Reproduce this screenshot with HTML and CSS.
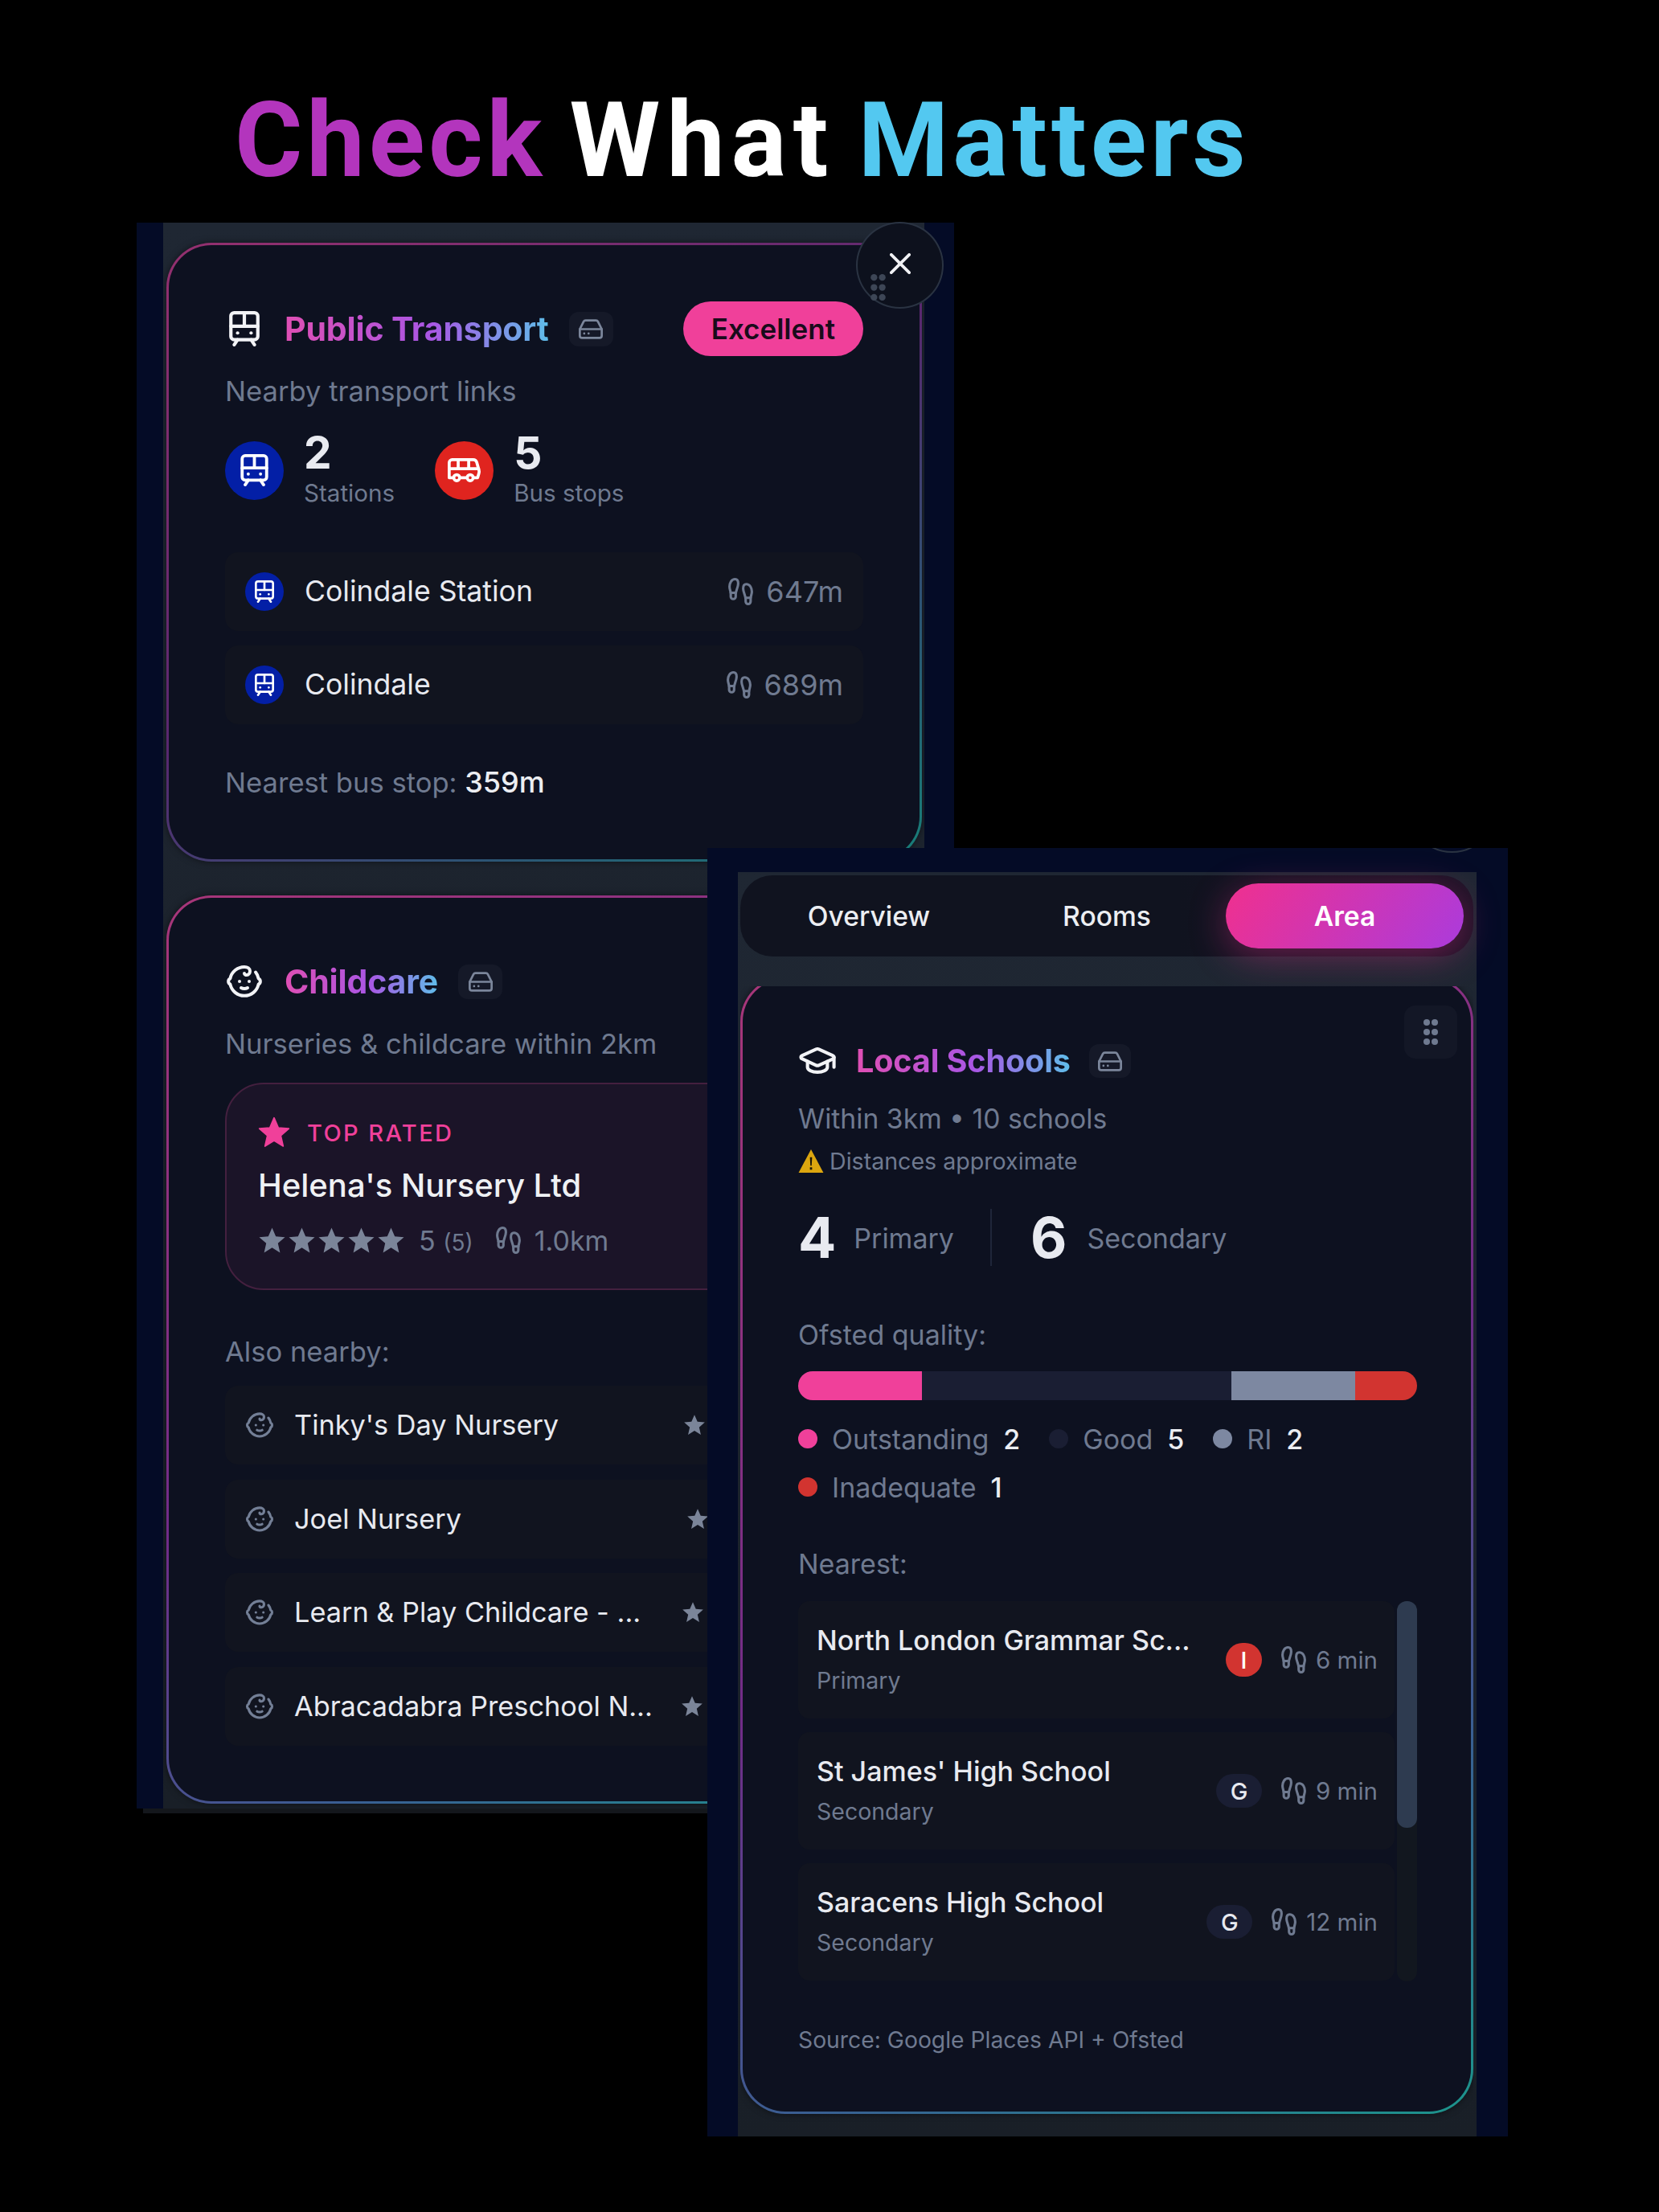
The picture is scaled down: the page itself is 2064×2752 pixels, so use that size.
FILE: index.html
```html
<!DOCTYPE html>
<html lang="en">
<head>
    <meta charset="UTF-8">
    <meta name="viewport" content="width=device-width, initial-scale=1.0">
    <title>Check What Matters</title>
    <link rel="stylesheet" href="styles.css">
</head>
<body>

    <svg class="sprite" aria-hidden="true">
        <symbol id="i-tram" viewBox="3 2 18 21">
            <rect width="16" height="16" x="4" y="3" rx="2"/><path d="M4 11h16"/><path d="M12 3v8"/><path d="m8 19-2 3"/><path d="m18 22-2-3"/><path d="M8 15h.01"/><path d="M16 15h.01"/>
        </symbol>
        <symbol id="i-bus" viewBox="1 5 22 16">
            <path d="M8 6v6"/><path d="M15 6v6"/><path d="M2 12h19.6"/><path d="M18 18h3s.5-1.7.8-2.8c.1-.4.2-.8.2-1.2 0-.4-.1-.8-.2-1.2l-1.4-5C20.1 6.8 19.1 6 18 6H4a2 2 0 0 0-2 2v10h3"/><circle cx="7" cy="18" r="2"/><path d="M9 18h5"/><circle cx="16" cy="18" r="2"/>
        </symbol>
        <symbol id="i-foot" viewBox="2 1 20 22">
            <path d="M4 16v-2.38C4 11.5 2.97 10.5 3 8c.03-2.72 1.49-6 4.5-6C9.37 2 10 3.8 10 5.5c0 3.11-2 5.66-2 8.68V16a2 2 0 1 1-4 0Z"/><path d="M20 20v-2.38c0-2.12 1.03-3.12 1-5.62-.03-2.72-1.49-6-4.5-6C14.63 6 14 7.8 14 9.5c0 3.11 2 5.66 2 8.68V20a2 2 0 1 0 4 0Z"/><path d="M16 17h4"/><path d="M4 13h4"/>
        </symbol>
        <symbol id="i-baby" viewBox="0.5 2 23 20">
            <path d="M9 12h.01"/><path d="M15 12h.01"/><path d="M10 16c.5.3 1.2.5 2 .5s1.5-.2 2-.5"/><path d="M19 6.3a9 9 0 0 1 1.8 3.9 2 2 0 0 1 0 3.6 9 9 0 0 1-17.6 0 2 2 0 0 1 0-3.6A9 9 0 0 1 12 3c2 0 3.5 1.1 3.5 2.5s-.9 2.5-2 2.5c-.8 0-1.5-.4-1.5-1"/>
        </symbol>
        <symbol id="i-cap" viewBox="1 4 22 17">
            <path d="M21.42 10.922a1 1 0 0 0-.019-1.838L12.83 5.18a2 2 0 0 0-1.66 0L2.6 9.08a1 1 0 0 0 0 1.832l8.57 3.908a2 2 0 0 0 1.66 0z"/><path d="M22 10v6"/><path d="M6 12.5V16a6 3 0 0 0 12 0v-3.5"/>
        </symbol>
        <symbol id="i-drive" viewBox="1 3 22 18">
            <path d="M22 12H2"/><path d="M5.45 5.11 2 12v6a2 2 0 0 0 2 2h16a2 2 0 0 0 2-2v-6l-3.45-6.89A2 2 0 0 0 16.76 4H7.24a2 2 0 0 0-1.79 1.11z"/><path d="M6 16h.01"/><path d="M10 16h.01"/>
        </symbol>
        <symbol id="i-x" viewBox="5 5 14 14">
            <path d="M18 6 6 18"/><path d="m6 6 12 12"/>
        </symbol>
        <symbol id="i-star" viewBox="0 0 24 24">
            <polygon points="12 1 15.2 8.4 23 9.1 17 14.3 18.8 22.2 12 18 5.2 22.2 7 14.3 1 9.1 8.8 8.4"/>
        </symbol>
        <symbol id="i-grip" viewBox="0 0 18 32">
            <circle cx="4" cy="4" r="4"/><circle cx="14" cy="4" r="4"/><circle cx="4" cy="16" r="4"/><circle cx="14" cy="16" r="4"/><circle cx="4" cy="28" r="4"/><circle cx="14" cy="28" r="4"/>
        </symbol>
        <symbol id="i-warn" viewBox="0 0 32 30">
            <path class="warn-fill" d="M16 0 32 30H0Z"/><path class="warn-mark" d="M14.6 10h2.8l-.6 11h-1.6zM14.6 23h2.8v3h-2.8z"/>
        </symbol>
    </svg>

    <h1 class="headline"><span class="purple">Check</span> <span class="wide">What</span> <span class="sky">Matters</span></h1>

    <section class="panel panel-left">
        <button class="close-btn" type="button" aria-label="Close">
            <svg class="ico x-ico"><use href="#i-x"/></svg>
            <svg class="solid grip-faint"><use href="#i-grip"/></svg>
        </button>

        <div class="panel-inner left-inner">
            <article class="card card-dim">
                <header class="card-head">
                    <span class="head-icon"><svg class="ico tram-head"><use href="#i-tram"/></svg></span>
                    <h2 class="card-title">Public Transport</h2>
                    <span class="mini-badge"><svg class="ico drive-ico"><use href="#i-drive"/></svg></span>
                    <span class="score-pill">Excellent</span>
                </header>
                <p class="sub sub-first">Nearby transport links</p>

                <div class="transport-stats">
                    <div class="stat">
                        <span class="stat-circle blue"><svg class="ico tram-stat"><use href="#i-tram"/></svg></span>
                        <div>
                            <div class="stat-num">2</div>
                            <div class="stat-label">Stations</div>
                        </div>
                    </div>
                    <div class="stat">
                        <span class="stat-circle red"><svg class="ico bus-stat"><use href="#i-bus"/></svg></span>
                        <div>
                            <div class="stat-num">5</div>
                            <div class="stat-label">Bus stops</div>
                        </div>
                    </div>
                </div>

                <div class="rows station-rows">
                    <div class="row">
                        <span class="row-circle"><svg class="ico tram-row"><use href="#i-tram"/></svg></span>
                        <span class="row-name">Colindale Station</span>
                        <span class="row-dist"><svg class="ico foot"><use href="#i-foot"/></svg>647m</span>
                    </div>
                    <div class="row">
                        <span class="row-circle"><svg class="ico tram-row"><use href="#i-tram"/></svg></span>
                        <span class="row-name">Colindale</span>
                        <span class="row-dist"><svg class="ico foot"><use href="#i-foot"/></svg>689m</span>
                    </div>
                </div>

                <p class="sub nearest-stop">Nearest bus stop: <strong>359m</strong></p>
            </article>

            <article class="card">
                <header class="card-head">
                    <span class="head-icon"><svg class="ico baby-head"><use href="#i-baby"/></svg></span>
                    <h2 class="card-title">Childcare</h2>
                    <span class="mini-badge"><svg class="ico drive-ico"><use href="#i-drive"/></svg></span>
                    <span class="score-pill">3</span>
                </header>
                <p class="sub sub-first">Nurseries &amp; childcare within 2km</p>

                <div class="top-box">
                    <div class="top-tag"><svg class="solid star-pink"><use href="#i-star"/></svg>TOP RATED</div>
                    <div class="top-name">Helena's Nursery Ltd</div>
                    <div class="top-meta">
                        <span class="stars">
                            <svg class="solid star-grey"><use href="#i-star"/></svg>
                            <svg class="solid star-grey"><use href="#i-star"/></svg>
                            <svg class="solid star-grey"><use href="#i-star"/></svg>
                            <svg class="solid star-grey"><use href="#i-star"/></svg>
                            <svg class="solid star-grey"><use href="#i-star"/></svg>
                        </span>
                        <span class="rate">5 <small>(5)</small></span>
                        <svg class="ico foot"><use href="#i-foot"/></svg>
                        <span>1.0km</span>
                    </div>
                </div>

                <p class="sub also">Also nearby:</p>
                <div class="rows nursery-rows">
                    <div class="row">
                        <svg class="ico baby-row"><use href="#i-baby"/></svg>
                        <span class="row-name">Tinky's Day Nursery</span>
                        <svg class="solid star-row star-a"><use href="#i-star"/></svg>
                    </div>
                    <div class="row">
                        <svg class="ico baby-row"><use href="#i-baby"/></svg>
                        <span class="row-name">Joel Nursery</span>
                        <svg class="solid star-row star-b"><use href="#i-star"/></svg>
                    </div>
                    <div class="row">
                        <svg class="ico baby-row"><use href="#i-baby"/></svg>
                        <span class="row-name">Learn &amp; Play Childcare - ...</span>
                        <svg class="solid star-row star-c"><use href="#i-star"/></svg>
                    </div>
                    <div class="row">
                        <svg class="ico baby-row"><use href="#i-baby"/></svg>
                        <span class="row-name">Abracadabra Preschool N...</span>
                        <svg class="solid star-row star-d"><use href="#i-star"/></svg>
                    </div>
                </div>
            </article>
        </div>
    </section>

    <section class="panel panel-right">
        <span class="close-peek"></span>
        <div class="panel-inner right-inner">
            <nav class="tabs">
                <a class="tab">Overview</a>
                <a class="tab">Rooms</a>
                <a class="tab tab-on">Area</a>
            </nav>

            <div class="scroll-clip">
                <article class="card school-card">
                    <span class="grip-btn"><svg class="solid grip"><use href="#i-grip"/></svg></span>
                    <header class="card-head school-head">
                        <span class="head-icon"><svg class="ico cap-head"><use href="#i-cap"/></svg></span>
                        <h2 class="card-title">Local Schools</h2>
                        <span class="mini-badge"><svg class="ico drive-ico"><use href="#i-drive"/></svg></span>
                    </header>
                    <p class="sub within">Within 3km &bull; 10 schools</p>
                    <p class="approx"><svg class="warn"><use href="#i-warn"/></svg>Distances approximate</p>

                    <div class="school-stats">
                        <span class="big-num">4</span>
                        <span class="big-label">Primary</span>
                        <span class="stats-rule"></span>
                        <span class="big-num">6</span>
                        <span class="big-label">Secondary</span>
                    </div>

                    <p class="sub ofsted">Ofsted quality:</p>
                    <div class="quality-bar">
                        <span class="seg-2 pink"></span>
                        <span class="seg-5 navy"></span>
                        <span class="seg-2 slate"></span>
                        <span class="seg-1 crimson"></span>
                    </div>
                    <ul class="legend">
                        <li><i class="dot pink"></i>Outstanding<b>2</b></li>
                        <li><i class="dot navy"></i>Good<b>5</b></li>
                        <li><i class="dot slate"></i>RI<b>2</b></li>
                        <li><i class="dot crimson"></i>Inadequate<b>1</b></li>
                    </ul>

                    <p class="sub nearest">Nearest:</p>
                    <div class="school-list">
                        <div class="school-rows">
                            <div class="school-row">
                                <div class="school-text">
                                    <div class="school-name">North London Grammar Sc...</div>
                                    <div class="school-type">Primary</div>
                                </div>
                                <span class="grade grade-i">I</span>
                                <span class="walk"><svg class="ico foot"><use href="#i-foot"/></svg>6 min</span>
                            </div>
                            <div class="school-row">
                                <div class="school-text">
                                    <div class="school-name">St James' High School</div>
                                    <div class="school-type">Secondary</div>
                                </div>
                                <span class="grade">G</span>
                                <span class="walk"><svg class="ico foot"><use href="#i-foot"/></svg>9 min</span>
                            </div>
                            <div class="school-row">
                                <div class="school-text">
                                    <div class="school-name">Saracens High School</div>
                                    <div class="school-type">Secondary</div>
                                </div>
                                <span class="grade">G</span>
                                <span class="walk"><svg class="ico foot"><use href="#i-foot"/></svg>12 min</span>
                            </div>
                        </div>
                        <div class="scroll-track"><div class="scroll-thumb"></div></div>
                    </div>

                    <p class="source">Source: Google Places API + Ofsted</p>
                </article>
            </div>
        </div>
    </section>

</body>
</html>
```

FILE: styles.css
```css
*{
    box-sizing: border-box;
}
body{
    margin: 0;
    min-height: 2752px;
    position: relative;
    background-color: #000;
    font-family: "Inter", "Liberation Sans", sans-serif;
    color: #e8eaf0;
}
p,h1,h2,ul{
    margin: 0;
    padding: 0;
}
.sprite{
    display: none;
}
.ico{
    fill: none;
    stroke: currentColor;
    stroke-width: 2;
    stroke-linecap: round;
    stroke-linejoin: round;
    flex: none;
}
.solid{
    fill: currentColor;
    flex: none;
}

/* heading */
.headline{
    padding: 100px 0 0 292px;
    font-family: "Roboto", sans-serif;
    font-size: 129px;
    line-height: 150px;
    font-weight: 700;
    letter-spacing: 5px;
    word-spacing: -8px;
    color: #fff;
    white-space: nowrap;
}
.purple{
    color: #b335bd;
}
.wide{
    letter-spacing: 8px;
}
.sky{
    color: #53c8f0;
}

/* the two pasted screens */
.panel{
    position: absolute;
    background-color: #040b26;
}
.panel-left{
    left: 170px;
    top: 277px;
    width: 1017px;
    height: 1973px;
    padding: 0 37px 0 33px;
}
.panel-left::after{
    content: "";
    position: absolute;
    left: 8px;
    right: 0;
    bottom: -6px;
    height: 6px;
    background-color: #14171c;
}
.panel-right{
    left: 880px;
    top: 1055px;
    width: 996px;
    height: 1603px;
    padding: 30px 39px 0 38px;
    overflow: hidden;
}
.panel-inner{
    height: 100%;
    background: linear-gradient(180deg, #1f2733, #191f27);
}
.left-inner{
    padding: 25px 3px 0 4px;
    display: flex;
    flex-direction: column;
    gap: 42px;
    overflow: hidden;
}
.right-inner{
    padding: 4px 4px 0 3px;
    display: flex;
    flex-direction: column;
}
.close-btn{
    position: absolute;
    left: 895px;
    top: -1px;
    width: 109px;
    height: 108px;
    z-index: 2;
    padding: 0;
    border: 2px solid #2a3342;
    border-radius: 50%;
    background-color: #0d111d;
    color: #f0f1f4;
}
.x-ico{
    position: absolute;
    left: 40px;
    top: 37px;
    width: 26px;
    height: 26px;
}
.grip-faint{
    position: absolute;
    left: 16px;
    top: 63px;
    width: 19px;
    height: 33px;
    color: #3d4656;
}
.close-peek{
    position: absolute;
    left: 872px;
    top: -103px;
    width: 109px;
    height: 109px;
    border: 2px solid #2a3342;
    border-radius: 50%;
}

/* cards */
.card{
    flex: none;
    padding: 0 70px;
    border: 3px solid transparent;
    border-radius: 56px;
    background:
        linear-gradient(#0d1120, #0d1120) padding-box,
        linear-gradient(150deg, #a83679 0%, #702c88 48%, #386092 76%, #1c958c 100%) border-box;
    box-shadow: 0 0 8px rgba(0, 0, 0, 0.5);
}
.card-dim{
    background:
        linear-gradient(#0d1120, #0d1120) padding-box,
        linear-gradient(150deg, #95306f 0%, #58286f 48%, #2c5474 76%, #177f78 100%) border-box;
    padding-bottom: 73px;
}
.card-head{
    display: flex;
    align-items: center;
    height: 68px;
    margin-top: 70px;
}
.head-icon{
    width: 48px;
    margin-right: 26px;
    display: flex;
    justify-content: center;
    color: #f2f3f6;
}
.tram-head{
    width: 38px;
    height: 44px;
}
.baby-head{
    width: 46px;
    height: 40px;
}
.cap-head{
    width: 48px;
    height: 35px;
}
.card-title{
    font-size: 41px;
    line-height: 52px;
    font-weight: 700;
    letter-spacing: -0.15px;
    background: linear-gradient(90deg, #df4fb4 0%, #a956e4 55%, #5fbde9 100%);
    -webkit-background-clip: text;
    background-clip: text;
    color: transparent;
}
.mini-badge{
    margin-left: 25px;
    width: 55px;
    height: 43px;
    display: flex;
    align-items: center;
    justify-content: center;
    border-radius: 12px;
    background-color: #151928;
    color: #7b869b;
}
.drive-ico{
    width: 30px;
    height: 25px;
}
.score-pill{
    margin-left: auto;
    padding: 0 35px;
    height: 68px;
    display: flex;
    align-items: center;
    border-radius: 34px;
    background-color: #f0409a;
    color: #190b1b;
    font-size: 35px;
    font-weight: 600;
}
.sub{
    font-size: 34.6px;
    line-height: 46px;
    color: #6f7a90;
}
.sub-first{
    margin-top: 20px;
}
.sub strong{
    font-size: 36px;
    font-weight: 500;
    color: #eceef2;
}

/* transport */
.transport-stats{
    display: flex;
    gap: 50px;
    margin-top: 28px;
}
.stat{
    display: flex;
    align-items: center;
    gap: 25px;
}
.stat-circle{
    width: 73px;
    height: 73px;
    border-radius: 50%;
    display: flex;
    align-items: center;
    justify-content: center;
    color: #fff;
}
.blue{
    background-color: #031fa6;
}
.red{
    background-color: #e0241f;
}
.tram-stat{
    width: 35px;
    height: 40px;
}
.bus-stat{
    width: 41px;
    height: 30px;
}
.stat-num{
    font-size: 55px;
    line-height: 52px;
    font-weight: 700;
    color: #e8eaf0;
}
.stat-label{
    margin-top: 4px;
    font-size: 29.6px;
    line-height: 40px;
    color: #6f7a90;
}
.rows{
    display: flex;
    flex-direction: column;
}
.station-rows{
    margin-top: 54px;
    gap: 18px;
}
.row{
    height: 98px;
    display: flex;
    align-items: center;
    padding: 0 25px;
    border-radius: 16px;
    background-color: #11141f;
}
.row-circle{
    width: 48px;
    height: 48px;
    margin-right: 26px;
    border-radius: 50%;
    display: flex;
    align-items: center;
    justify-content: center;
    background-color: #031fa6;
    color: #fff;
}
.tram-row{
    width: 24px;
    height: 28px;
}
.row-name{
    flex: 1;
    font-size: 35.6px;
    line-height: 46px;
    color: #e8eaf0;
    white-space: nowrap;
    overflow: hidden;
}
.row-dist{
    display: flex;
    align-items: center;
    gap: 16px;
    font-size: 36px;
    color: #6f7a90;
}
.foot{
    width: 31px;
    height: 34px;
    color: #6f7a90;
}
.nearest-stop{
    margin-top: 49px;
}

/* childcare */
.top-box{
    margin-top: 26px;
    height: 258px;
    padding: 40px 39px 0;
    border: 2px solid #44203f;
    border-radius: 48px;
    background-color: #1b1428;
}
.top-tag{
    display: flex;
    align-items: center;
    gap: 21px;
    height: 40px;
    font-size: 29px;
    letter-spacing: 2.4px;
    font-weight: 500;
    color: #f0409a;
}
.star-pink{
    width: 40px;
    height: 40px;
    stroke: currentColor;
    stroke-width: 1;
    stroke-linejoin: round;
}
.top-name{
    margin-top: 20px;
    font-size: 40px;
    line-height: 52px;
    font-weight: 500;
    color: #eff1f4;
}
.top-meta{
    margin-top: 20px;
    height: 44px;
    display: flex;
    align-items: center;
    font-size: 34px;
    color: #6f7a90;
}
.stars{
    display: flex;
    gap: 2px;
    margin-right: 17px;
}
.star-grey{
    width: 35px;
    height: 35px;
    color: #7b8599;
}
.rate{
    margin-right: 28px;
}
.rate small{
    font-size: 28px;
}
.top-meta .foot{
    margin-right: 17px;
}
.also{
    margin-top: 53px;
}
.nursery-rows{
    margin-top: 20px;
    margin-bottom: 69px;
    gap: 18.5px;
}
.nursery-rows .row{
    padding-left: 25px;
}
.nursery-rows .row-name{
    font-size: 34.3px;
}
.baby-row{
    width: 36px;
    height: 32px;
    margin-right: 25px;
    color: #737f96;
}
.star-row{
    width: 28px;
    height: 28px;
    color: #7b8599;
}
.star-a{
    margin-right: 171px;
}
.star-b{
    margin-right: 167px;
}
.star-c{
    margin-right: 173px;
}
.star-d{
    margin-right: 174px;
}

/* tabs */
.tabs{
    flex: none;
    height: 101px;
    display: grid;
    grid-template-columns: repeat(3, 1fr);
    align-items: center;
    padding: 0 12px;
    border-radius: 40px;
    background-color: #10131f;
    background-image: linear-gradient(90deg, transparent 60%, #1c1326);
}
.tab{
    height: 81px;
    display: flex;
    align-items: center;
    justify-content: center;
    font-size: 33.6px;
    font-weight: 500;
    color: #eceef2;
}
.tab-on{
    border-radius: 41px;
    background: linear-gradient(125deg, #f0308e, #ab3bdc);
    box-shadow: 0 10px 46px rgba(236, 48, 142, 0.38);
    color: #fff;
    font-weight: 600;
}
.scroll-clip{
    margin-top: 37px;
    flex: 1;
    overflow: hidden;
}

/* schools */
.school-card{
    position: relative;
    margin-top: -12px;
    height: 1415px;
    padding: 0 67px 0 69px;
}
.grip-btn{
    position: absolute;
    top: 33px;
    right: 17px;
    width: 66px;
    height: 66px;
    display: flex;
    align-items: center;
    justify-content: center;
    border-radius: 14px;
    background-color: #131726;
    color: #6f7a90;
}
.grip{
    width: 18px;
    height: 32px;
}
.school-head{
    margin-top: 81px;
    height: 42px;
}
.school-head .head-icon{
    margin-right: 24px;
}
.school-head .card-title{
    font-size: 39.6px;
}
.school-head .mini-badge{
    width: 52px;
    height: 42px;
    margin-left: 23px;
}
.school-card .sub{
    font-size: 34px;
}
.school-card .within{
    margin-top: 28px;
    font-size: 33.7px;
}
.approx{
    margin-top: 9px;
    height: 40px;
    display: flex;
    align-items: center;
    gap: 7px;
    font-size: 28.6px;
    color: #6f7a90;
}
.warn{
    width: 32px;
    height: 29px;
}
.warn-fill{
    fill: #dca60f;
}
.warn-mark{
    fill: #1b1608;
}
.school-stats{
    margin-top: 40px;
    height: 71px;
    display: flex;
    align-items: center;
}
.big-num{
    font-size: 70px;
    line-height: 71px;
    font-weight: 700;
    color: #e8eaf0;
}
.big-label{
    margin-left: 22px;
    padding-top: 2px;
    font-size: 34px;
    color: #6f7a90;
}
.stats-rule{
    width: 2px;
    height: 71px;
    margin: 0 48px 0 45px;
    background-color: #1f2639;
}
.stats-rule ~ .big-label{
    margin-left: 25px;
}
.ofsted{
    margin-top: 63px;
}
.quality-bar{
    margin-top: 22px;
    height: 36px;
    display: flex;
    border-radius: 18px;
    overflow: hidden;
}
.seg-1{
    flex: 1;
}
.seg-2{
    flex: 2;
}
.seg-5{
    flex: 5;
}
.pink{
    background-color: #f0409a;
}
.navy{
    background-color: #1a1e33;
}
.slate{
    background-color: #7d88a1;
}
.crimson{
    background-color: #d23430;
}
.legend{
    margin-top: 25px;
    list-style: none;
    display: flex;
    flex-wrap: wrap;
    gap: 14px 36px;
}
.legend li{
    display: flex;
    align-items: center;
    height: 46px;
    font-size: 34px;
    color: #6f7a90;
}
.legend b{
    margin-left: 18px;
    font-weight: 500;
    color: #eceef2;
}
.dot{
    width: 24px;
    height: 24px;
    margin-right: 18px;
    border-radius: 50%;
}
.nearest{
    margin-top: 50px;
}
.school-list{
    margin-top: 23px;
    height: 473px;
    display: flex;
    gap: 3px;
}
.school-rows{
    flex: 1;
    min-width: 0;
    display: flex;
    flex-direction: column;
    gap: 17px;
}
.school-row{
    height: 146px;
    display: flex;
    align-items: center;
    padding: 0 21px 0 23px;
    border-radius: 14px;
    background-color: #11141f;
}
.school-text{
    flex: 1;
    min-width: 0;
    padding-bottom: 2px;
}
.school-name{
    font-size: 34px;
    line-height: 46px;
    font-weight: 500;
    color: #e8eaf0;
    white-space: nowrap;
}
.school-type{
    margin-top: 7px;
    font-size: 28.5px;
    line-height: 40px;
    color: #6f7a90;
}
.grade{
    min-width: 57px;
    height: 42px;
    margin-right: 24px;
    display: flex;
    align-items: center;
    justify-content: center;
    border-radius: 22px;
    background-color: #1a1e33;
    font-size: 29px;
    font-weight: 500;
    color: #e8eaf0;
}
.grade-i{
    min-width: 45px;
    background-color: #d23430;
    color: #fff;
}
.walk{
    display: flex;
    align-items: center;
    gap: 12px;
    font-size: 29.5px;
    color: #6f7a90;
}
.scroll-track{
    width: 25px;
    border-radius: 12px;
    background-color: #12171f;
}
.scroll-thumb{
    height: 282px;
    border-radius: 12px;
    background-color: #2e3b50;
}
.source{
    margin-top: 53px;
    font-size: 28.3px;
    line-height: 40px;
    color: #6f7a90;
}
```
